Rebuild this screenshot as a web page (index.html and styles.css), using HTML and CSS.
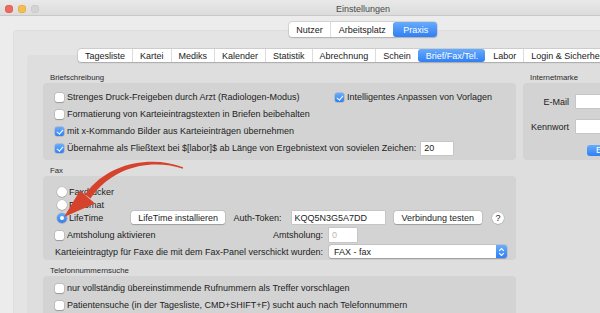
FILE: index.html
```html
<!DOCTYPE html>
<html lang="de">
<head>
    <meta charset="UTF-8">
    <meta name="viewport" content="width=device-width, initial-scale=1.0">
    <title>Einstellungen</title>
    <link rel="stylesheet" href="styles.css">
</head>
<body>
    <div class="window">
        <div class="titlebar">
            <div class="lights">
                <span class="light red"></span>
                <span class="light yellow"></span>
                <span class="light off"></span>
            </div>
            <div class="title">Einstellungen</div>
        </div>

        <div class="seg seg-main">
            <span>Nutzer</span>
            <span>Arbeitsplatz</span>
            <span class="on">Praxis</span>
        </div>

        <div class="tabview">
            <div class="seg seg-tabs">
                <span>Tagesliste</span>
                <span>Kartei</span>
                <span>Mediks</span>
                <span>Kalender</span>
                <span>Statistik</span>
                <span>Abrechnung</span>
                <span>Schein</span>
                <span class="on">Brief/Fax/Tel.</span>
                <span>Labor</span>
                <span>Login &amp; Sicherheit</span>
            </div>

            <div class="pane">
                <!-- Briefschreibung -->
                <section class="group left">
                    <div class="group-title">Briefschreibung</div>
                    <div class="box box-brief">
                        <div class="row">
                            <label class="check first"><span class="cb"></span>Strenges Druck-Freigeben durch Arzt (Radiologen-Modus)</label>
                            <label class="check"><span class="cb on"></span>Intelligentes Anpassen von Vorlagen</label>
                        </div>
                        <div class="row">
                            <label class="check"><span class="cb"></span>Formatierung von Karteieintragstexten in Briefen beibehalten</label>
                        </div>
                        <div class="row">
                            <label class="check"><span class="cb on"></span>mit x-Kommando Bilder aus Karteieinträgen übernehmen</label>
                        </div>
                        <div class="row">
                            <label class="check"><span class="cb on"></span>Übernahme als Fließtext bei $[labor]$ ab Länge von Ergebnistext von sovielen Zeichen:</label>
                            <input class="field field-num" type="text" value="20">
                        </div>
                    </div>
                </section>

                <!-- Internetmarke -->
                <section class="group right">
                    <div class="group-title">Internetmarke</div>
                    <div class="box box-marke">
                        <span class="lbl">E-Mail</span>
                        <input class="field" type="text">
                        <span class="lbl">Kennwort</span>
                        <input class="field" type="password">
                        <button class="btn-blue">Einloggen</button>
                    </div>
                </section>

                <!-- Fax -->
                <section class="group left">
                    <div class="group-title">Fax</div>
                    <div class="box box-fax">
                        <div class="radio-row">
                            <label class="radio"><span class="rb"></span>Faxdrucker</label>
                        </div>
                        <div class="radio-row">
                            <label class="radio"><span class="rb"></span>Faxomat</label>
                        </div>
                        <div class="radio-row">
                            <label class="radio"><span class="rb on"></span>LifeTime</label>
                            <button class="btn btn-install">LifeTime installieren</button>
                            <span class="token-lbl">Auth-Token:</span>
                            <input class="field field-token" type="text" value="KQQ5N3G5A7DD">
                            <button class="btn btn-test">Verbindung testen</button>
                            <span class="help">?</span>
                        </div>
                        <div class="form-row amt">
                            <div class="form-lbl">
                                <label class="check"><span class="cb"></span>Amtsholung aktivieren</label>
                                <span class="push">Amtsholung:</span>
                            </div>
                            <input class="field field-amt" type="text" placeholder="0">
                        </div>
                        <div class="form-row kart">
                            <div class="form-lbl">
                                <span class="push">Karteieintragtyp für Faxe die mit dem Fax-Panel verschickt wurden:</span>
                            </div>
                            <div class="popup">
                                <span class="popup-text">FAX - fax</span>
                                <span class="stepper">
                                    <svg width="7" height="10" viewBox="0 0 7 10">
                                        <path d="M1.2 3.8 L3.5 1.6 L5.8 3.8 M1.2 6.2 L3.5 8.4 L5.8 6.2" fill="none" stroke="#fff" stroke-width="1.1"/>
                                    </svg>
                                </span>
                            </div>
                        </div>
                    </div>
                </section>

                <!-- Telefonnummernsuche -->
                <section class="group left">
                    <div class="group-title">Telefonnummernsuche</div>
                    <div class="box box-tel">
                        <div class="row">
                            <label class="check"><span class="cb"></span>nur vollständig übereinstimmende Rufnummern als Treffer vorschlagen</label>
                        </div>
                        <div class="row">
                            <label class="check"><span class="cb"></span>Patientensuche (in der Tagesliste, CMD+SHIFT+F) sucht auch nach Telefonnummern</label>
                        </div>
                    </div>
                </section>
            </div>
        </div>

        <svg class="arrow" width="600" height="313" viewBox="0 0 600 313">
            <path d="M183 167.3 C155 156.5 110 160 85 194.5 L90.5 198.5 C114 164 155 159.5 183 168.7 Z" fill="#d5432c"/>
            <path d="M64 217 L80 190.5 L95 203.5 Z" fill="#d5432c"/>
        </svg>
    </div>
</body>
</html>
```

FILE: styles.css
```css
* {
    box-sizing: border-box;
}
body {
    margin: 0;
    width: 600px;
    height: 313px;
    overflow: hidden;
    background-color: #ececec;
    font-family: "Liberation Sans", Arial, sans-serif;
    font-size: 9px;
    color: #222;
}
.window {
    position: relative;
    width: 726px;
}

/* title bar */
.titlebar {
    display: grid;
    grid-template-columns: 1fr auto 1fr;
    align-items: center;
    height: 16px;
    padding-top: 3px;
    background: linear-gradient(#e9e9e9, #dcdcdc);
    border-bottom: 1px solid #c8c8c8;
}
.lights {
    display: flex;
    gap: 5px;
    padding-left: 5px;
}
.light {
    width: 8px;
    height: 8px;
    border-radius: 50%;
}
.light.red {
    background-color: #ee6a5f;
    box-shadow: inset 0 0 0 0.5px #d8554b;
}
.light.yellow {
    background-color: #f5be4f;
    box-shadow: inset 0 0 0 0.5px #dba33a;
}
.light.off {
    background-color: #d4d4d4;
    box-shadow: inset 0 0 0 0.5px #c2c2c2;
}
.title {
    color: #4a4a4a;
}

/* segmented controls */
.seg {
    position: relative;
    z-index: 1;
    display: flex;
    width: fit-content;
    background-color: #fff;
    border-radius: 3px;
    box-shadow: 0 0 0 0.5px rgba(0, 0, 0, 0.14), 0 0.5px 1.5px rgba(0, 0, 0, 0.18);
}
.seg span {
    display: flex;
    align-items: center;
    padding: 0 7px;
    border-left: 1px solid #dcdcdc;
    white-space: nowrap;
}
.seg span:first-child {
    border-left: none;
}
.seg span.on {
    background: linear-gradient(#69abfb, #2f7ff4);
    color: #fff;
    border-left-color: transparent;
    border-radius: 3px;
}
.seg span.on + span {
    border-left-color: transparent;
}
.seg-main {
    height: 15px;
    margin: 6px auto 0;
}
.seg-main span {
    padding: 0 7.5px;
}
.seg-main span.on {
    padding: 0 9px;
}
.seg-tabs {
    height: 13px;
    margin-left: 65px;
}

/* tab view */
.tabview {
    margin: -7px 13px 0;
    padding-top: 19px;
    height: 300px;
    background-color: #e4e4e4;
    border-radius: 4px;
    box-shadow: inset 0 0 0 0.5px rgba(0, 0, 0, 0.05);
}
.pane {
    display: grid;
    grid-template-columns: 473px 1fr;
    align-content: start;
    column-gap: 7px;
    row-gap: 6px;
    margin: -7px 14px 0;
    padding: 18px 16px 0;
    height: 280px;
    background-color: #dedede;
    border-radius: 4px;
}

/* groups */
.group {
    display: flex;
    flex-direction: column;
}
.group.left {
    grid-column: 1;
}
.group.right {
    grid-column: 2;
    grid-row: 1;
}
.group-title {
    height: 10px;
    line-height: 10px;
    padding-left: 7px;
    font-size: 7.8px;
    color: #2b2b2b;
}
.box {
    flex: 1;
    background-color: #d3d3d3;
    border-radius: 4px;
}

.row {
    display: flex;
    align-items: center;
    height: 14px;
}
.box-brief {
    display: flex;
    flex-direction: column;
    gap: 3px;
    padding: 7px 12px 5px;
}
.box-tel {
    display: flex;
    flex-direction: column;
    gap: 3px;
    padding: 5px 12px 0;
    height: 40px;
    flex: none;
}

/* checkbox + radio */
.check,
.radio {
    display: flex;
    align-items: center;
    gap: 3px;
    white-space: nowrap;
}
.check.first {
    width: 280px;
}
.cb {
    position: relative;
    flex: none;
    width: 9px;
    height: 9px;
    border-radius: 2px;
    background-color: #fff;
    box-shadow: 0 0 0 0.5px rgba(0, 0, 0, 0.15), 0 0.5px 1px rgba(0, 0, 0, 0.22);
}
.cb.on {
    background: linear-gradient(#68adfb, #2f7ff4);
    box-shadow: 0 0 0 0.5px rgba(0, 60, 160, 0.3);
}
.cb.on::after {
    content: "";
    position: absolute;
    left: 3px;
    top: 1px;
    width: 2.5px;
    height: 5px;
    border: solid #fff;
    border-width: 0 1.4px 1.4px 0;
    transform: rotate(40deg);
}
.rb {
    position: relative;
    flex: none;
    width: 10px;
    height: 10px;
    border-radius: 50%;
    background-color: #fff;
    box-shadow: 0 0 0 0.5px rgba(0, 0, 0, 0.15), 0 0.5px 1px rgba(0, 0, 0, 0.22);
}
.rb.on {
    background: linear-gradient(#68adfb, #2f7ff4);
}
.rb.on::after {
    content: "";
    position: absolute;
    left: 3px;
    top: 3px;
    width: 4px;
    height: 4px;
    border-radius: 50%;
    background-color: #fff;
}
.radio {
    gap: 2px;
    width: 75px;
    margin-left: 2px;
}

/* fields and buttons */
.field {
    height: 13px;
    padding: 0 3px;
    border: none;
    outline: none;
    background-color: #fff;
    font-family: inherit;
    font-size: 9px;
    color: #222;
    box-shadow: 0 0 0 0.5px rgba(0, 0, 0, 0.12);
}
.field::placeholder {
    color: #b8b8b8;
}
.field-num {
    width: 32px;
    margin-left: 5px;
    height: 13px;
}
.btn {
    height: 13px;
    padding: 0;
    border: none;
    border-radius: 2.5px;
    background-color: #fff;
    font-family: inherit;
    font-size: 9px;
    color: #222;
    box-shadow: 0 0 0 0.5px rgba(0, 0, 0, 0.12), 0 0.5px 1px rgba(0, 0, 0, 0.2);
}
.btn-install {
    width: 96px;
}
.token-lbl {
    margin-left: 8px;
    white-space: nowrap;
}
.field-token {
    width: 93px;
    margin-left: 10px;
}
.btn-test {
    width: 90px;
    margin-left: 9px;
}
.help {
    display: grid;
    place-items: center;
    width: 12px;
    height: 12px;
    margin-left: 10px;
    border-radius: 50%;
    background-color: #fff;
    font-size: 9px;
    box-shadow: 0 0 0 0.5px rgba(0, 0, 0, 0.12), 0 0.5px 1px rgba(0, 0, 0, 0.2);
}

/* fax box */
.box-fax {
    flex: none;
    height: 84px;
    padding: 9px 12px 2px;
}
.radio-row {
    display: flex;
    align-items: center;
    height: 13px;
}
.form-row {
    display: grid;
    grid-template-columns: 268px auto;
    column-gap: 6px;
    align-items: center;
}
.form-row.amt {
    height: 14px;
    margin-top: 4px;
}
.form-row.kart {
    height: 13px;
    margin-top: 3px;
}
.form-lbl {
    display: flex;
    align-items: center;
    white-space: nowrap;
}
.push {
    margin-left: auto;
}
.field-amt {
    width: 28px;
    height: 14px;
}
.popup {
    display: flex;
    width: 178px;
    height: 13px;
    background-color: #fff;
    border-radius: 2.5px;
    box-shadow: 0 0 0 0.5px rgba(0, 0, 0, 0.12), 0 0.5px 1px rgba(0, 0, 0, 0.2);
}
.popup-text {
    flex: 1;
    display: flex;
    align-items: center;
    padding-left: 5px;
}
.stepper {
    display: grid;
    place-items: center;
    width: 11px;
    background: linear-gradient(#68adfb, #2f7ff4);
    border-radius: 0 2.5px 2.5px 0;
}

/* internetmarke */
.box-marke {
    display: grid;
    grid-template-columns: 38px 1fr;
    grid-auto-rows: 13px;
    column-gap: 7px;
    row-gap: 12px;
    align-items: center;
    align-content: start;
    padding: 12px 0 0 8px;
}
.lbl {
    text-align: right;
    white-space: nowrap;
}
.box-marke .field {
    width: 100%;
}
.btn-blue {
    grid-column: 2;
    justify-self: start;
    height: 11px;
    margin: -3px 0 0 11px;
    padding: 0 9px;
    border: none;
    border-radius: 3px;
    background: linear-gradient(#68adfb, #2f7ff4);
    color: #fff;
    font-family: inherit;
    font-size: 9px;
    line-height: 11px;
}

/* annotation arrow over the screenshot */
.arrow {
    position: absolute;
    top: 0;
    left: 0;
    pointer-events: none;
}
```
